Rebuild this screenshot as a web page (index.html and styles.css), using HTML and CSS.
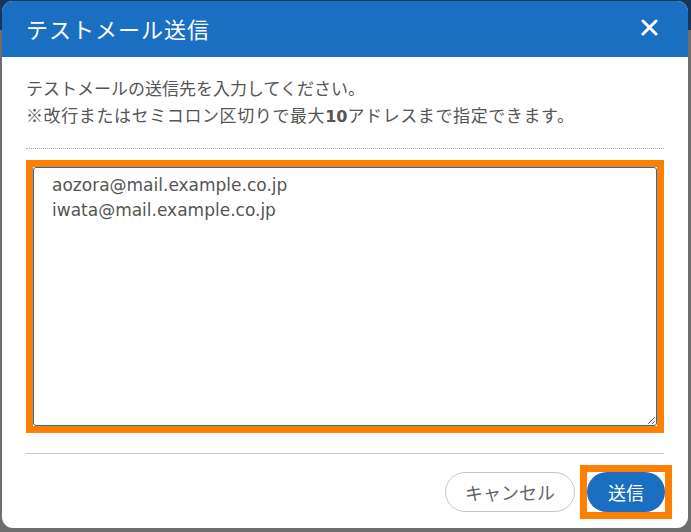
FILE: index.html
```html
<!DOCTYPE html>
<html lang="ja">
<head>
<meta charset="utf-8">
<title>テストメール送信</title>
<link rel="stylesheet" href="styles.css">
</head>
<body>
<div class="dialog">
  <div class="header">
    <span class="title">テストメール送信</span>
    <span class="close" aria-label="閉じる">
      <svg width="17" height="17" viewBox="0 0 17 17"><path d="M2 2 L15 15 M15 2 L2 15" stroke="#fff" stroke-width="3" stroke-linecap="round"/></svg>
    </span>
  </div>
  <div class="body">
    <p class="desc">テストメールの送信先を入力してください。<br><span class="note">※改行またはセミコロン区切りで最大<b class="num">10</b>アドレスまで指定できます。</span></p>
    <div class="dotted"></div>
    <div class="hl hl-area">
      <textarea class="addresses" spellcheck="false">aozora@mail.example.co.jp
iwata@mail.example.co.jp</textarea>
    </div>
    <div class="solid"></div>
    <div class="footer">
      <button class="btn btn-cancel">キャンセル</button>
      <span class="hl hl-btn"><button class="btn btn-send">送信</button></span>
    </div>
  </div>
</div>
</body>
</html>
```
FILE: styles.css
```css
html, body { margin: 0; padding: 0; }
body {
  width: 691px;
  height: 532px;
  background: linear-gradient(#17365c 0, #17365c 30px, #6e6e6e 30px);
  font-family: "Noto Sans CJK JP", "Noto Sans", sans-serif;
  overflow: hidden;
}
.dialog {
  margin: 1px 0 0 2px;
  width: 686px;
  height: 527px;
  background: #fff;
  border-radius: 11px;
  overflow: hidden;
  display: flex;
  flex-direction: column;
}
.header {
  height: 56px;
  flex: none;
  background: #1b6fc2;
  display: flex;
  align-items: center;
  justify-content: space-between;
  padding: 0 30px 0 24px;
}
.title {
  color: #fff;
  font-size: 22px;
  letter-spacing: 1px;
  line-height: 1;
  margin-top: -2px;
}
.close { display: flex; margin-top: -3px; }
.body {
  padding: 0 24px;
  display: flex;
  flex-direction: column;
}
.desc {
  margin: 17px 0 0 0;
  font-size: 17px;
  line-height: 27px;
  color: #555;
}
.note { letter-spacing: 0.6px; }
.num { font-family: "DejaVu Sans", sans-serif; font-weight: 700; font-size: 16px; letter-spacing: 0; }
.dotted {
  margin-top: 18px;
  border-top: 1px dotted #a8a8a8;
}
.hl {
  border: 7px solid #ff8000;
  background: #fff;
}
.hl-area {
  margin-top: 11px;
  height: 259px;
  display: flex;
}
.addresses {
  flex: 1;
  margin: 0;
  border: 1px solid #1b6fc2;
  border-radius: 3px;
  padding: 5px 18px;
  font-family: "DejaVu Sans", sans-serif;
  font-size: 17px;
  line-height: 25px;
  color: #555;
  resize: both;
  outline: none;
}
.solid {
  margin-top: 20px;
  border-top: 1px solid #c4c4cc;
}
.footer {
  margin-top: 11px;
  margin-right: -8px;
  display: flex;
  justify-content: flex-end;
  align-items: center;
  gap: 5px;
}
.btn {
  height: 40px;
  border-radius: 20px;
  font-family: "Noto Sans CJK JP", sans-serif;
  font-size: 18px;
  line-height: 1;
  padding: 0;
  cursor: pointer;
}
.btn-cancel {
  width: 130px;
  background: #fff;
  border: 1px solid #c6c6c6;
  color: #666;
}
.hl-btn { display: flex; }
.btn-send {
  width: 78px;
  background: #1b6fc2;
  border: none;
  color: #fff;
}
```
